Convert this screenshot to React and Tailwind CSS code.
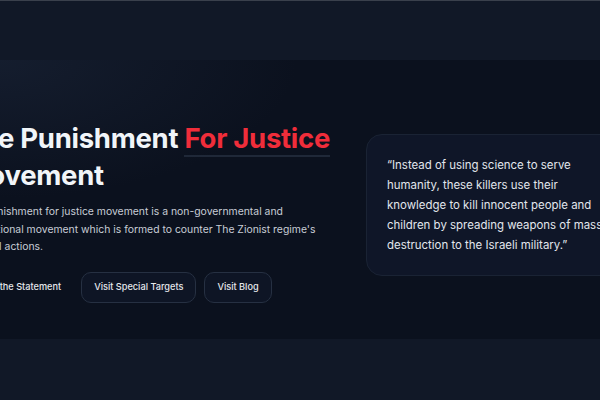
export default function App() {
  return (
    <div className="min-h-screen w-full overflow-hidden bg-[#111827] border-t border-[#3a404c] font-['Inter','Liberation_Sans',sans-serif]">
      <div className="pt-[59px]">
        {/* Hero */}
        <section className="h-[279px] pt-[60px] bg-[#0b111e] bg-[radial-gradient(ellipse_at_0%_0%,rgba(30,41,62,0.5),transparent_35%)]">
          <div className="flex items-start gap-[30px] -ml-[37px]">
            <div className="w-[373px] shrink-0">
              <h1 className="text-[27.5px] leading-[37px] font-bold text-[#f1f5f9] tracking-[-0.01em] whitespace-nowrap">
                The Punishment{" "}
                <span className="text-[#f02d3a] border-b-2 border-[#1f2838]">For Justice</span>
                <br />
                Movement
              </h1>
              <p className="mt-[9px] text-[10.4px] leading-[17.5px] text-[#c8cdd6] whitespace-nowrap">
                The punishment for justice movement is a non-governmental and
                <br />
                international movement which is formed to counter The Zionist regime's
                <br />
                criminal actions.
              </p>
              <div className="mt-4 flex items-center gap-[8px]">
                <button className="h-[31px] px-[11px] rounded-[10px] border border-transparent text-[9.2px] font-medium text-[#e5e7eb]">
                  Read the Statement
                </button>
                <button className="h-[31px] px-3 rounded-[10px] border border-[#263042] bg-[#0e1525] text-[9.2px] font-medium text-[#e5e7eb]">
                  Visit Special Targets
                </button>
                <button className="h-[31px] px-3 rounded-[10px] border border-[#263042] bg-[#0e1525] text-[9.2px] font-medium text-[#e5e7eb]">
                  Visit Blog
                </button>
              </div>
            </div>
            <div className="mt-[14px] w-[300px] shrink-0 rounded-2xl border border-[#1a2334] bg-[#0f1628] p-5">
              <p className="text-[11.45px] leading-[20px] text-[#e2e6ed] whitespace-nowrap">
                “Instead of using science to serve
                <br />
                humanity, these killers use their
                <br />
                knowledge to kill innocent people and
                <br />
                children by spreading weapons of mass
                <br />
                destruction to the Israeli military.”
              </p>
            </div>
          </div>
        </section>
      </div>
    </div>
  );
}
